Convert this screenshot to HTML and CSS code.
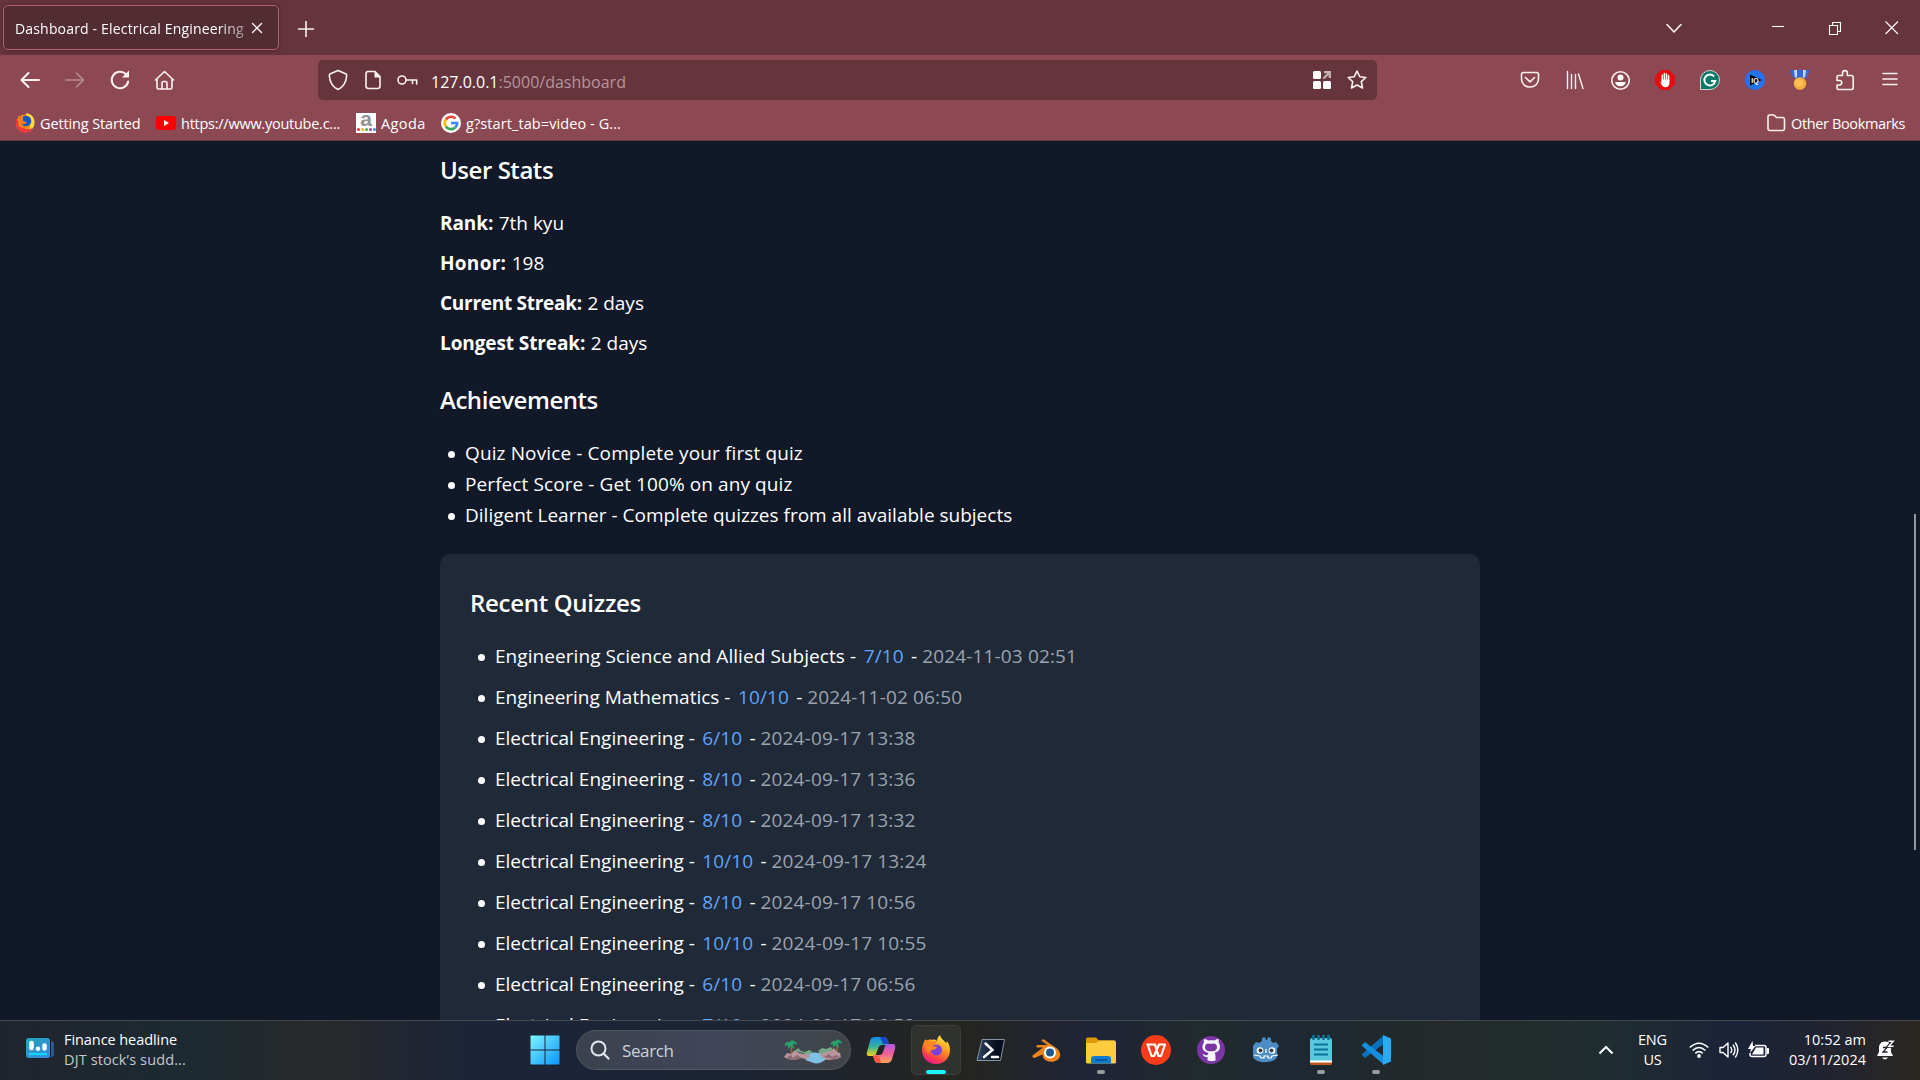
FILE: index.html
```html
<!DOCTYPE html>
<html lang="en">
<head>
<meta charset="utf-8">
<title>Dashboard - Electrical Engineering</title>
<link rel="stylesheet" href="styles.css">
</head>
<body>
<div class="screen">
  <header class="tabs">
    <div class="tab"><span class="tab-title">Dashboard - Electrical Engineering</span>
      <svg class="tab-close" width="12" height="12" viewBox="0 0 12 12"><path d="M1.500 1.500l9 9M10.500 1.500l-9 9" class="ln thin"/></svg>
    </div>
    <svg class="new-tab" width="16" height="16" viewBox="0 0 16 16"><path d="M8 .5v15M.5 8h15" class="ln"/></svg>
    <div class="window-controls">
      <svg width="20" height="20" viewBox="0 0 20 20"><path d="M3 6.500l7 7.500 7-7.500" class="ln"/></svg>
      <svg width="20" height="20" viewBox="0 0 20 20"><path d="M4 8.500h12" class="hair"/></svg>
      <svg width="20" height="20" viewBox="0 0 20 20"><path d="M4.500 7.500h8v9h-8zM7.500 7.500v-3h8v9h-3" class="hair"/></svg>
      <svg width="20" height="20" viewBox="0 0 20 20"><path d="M3.500 3.500l12.500 12.500M16 3.500L3.500 16" class="hair"/></svg>
    </div>
  </header>

  <div class="toolbar">
    <nav class="nav-icons">
      <svg width="22" height="22" viewBox="0 0 22 22"><path d="M20 11H3M9.500 4L2.500 11l7 7" class="ln bold"/></svg>
      <svg class="dim" width="22" height="22" viewBox="0 0 22 22"><path d="M2 11h17M12.500 4l7 7-7 7" class="ln"/></svg>
      <svg width="22" height="22" viewBox="0 0 22 22"><path d="M19.200 12.500A8.300 8.300 0 1 1 16.800 5" class="ln bold"/><path d="M20 1.500v7h-7z" fill="#fbf0f2"/></svg>
      <svg width="22" height="22" viewBox="0 0 22 22"><path d="M1.500 11L10.500 2.500l9 8.500M3 10v8.500q0 1.500 1.500 1.500h12q1.500 0 1.500-1.500V10M8 20v-6q0-1.500 1.500-1.500h2q1.500 0 1.500 1.500v6" class="ln"/></svg>
    </nav>
    <div class="urlbar">
      <svg width="20" height="22" viewBox="0 0 20 22"><path d="M10 1.500l7.500 3.300q1.300.6 1.200 2C18.200 13 15.500 18 10 20.500 4.500 18 1.800 13 1.300 6.800q-.1-1.400 1.200-2z" class="ln"/></svg>
      <svg class="doc" width="18" height="20" viewBox="0 0 18 20"><path d="M4 1.500h7l5 5V16q0 2.500-2.500 2.500h-9Q2 18.500 2 16V4Q2 1.500 4 1.500z" class="ln"/><path d="M10.500 1v6.500H17z" fill="#fbf0f2"/></svg>
      <svg class="key" width="21" height="14" viewBox="0 0 21 14"><circle cx="5" cy="7" r="4" class="ln"/><path d="M9 7h10.700v4M15.500 7v3.500" class="ln"/></svg>
      <span class="url">127.0.0.1<i>:5000/dashboard</i></span>
      <svg class="grid" width="18" height="18" viewBox="0 0 18 18"><rect width="8" height="8" rx="1.500" fill="#fff"/><rect y="10" width="8" height="8" rx="1.500" fill="#fff"/><rect x="10" y="10" width="8" height="8" rx="1.500" fill="#fff"/><path d="M10.500 7.500L15.500 2.500M11 1.200h5.800V7" fill="none" stroke="#c3b1b5" stroke-width="2.300"/></svg>
      <svg width="22" height="22" viewBox="0 0 22 22"><path d="M11 2l2.700 5.700 6.100.8-4.500 4.200 1.200 6.300-5.500-3-5.500 3 1.200-6.300L2.200 8.500l6.100-.8z" class="ln"/></svg>
    </div>
    <div class="extensions">
      <svg width="22" height="22" viewBox="0 0 22 22"><path d="M4.500 3.500h13q2 0 2 2v4.200c0 5-3.500 8.300-8.500 8.300S2.500 14.700 2.500 9.700V5.500q0-2 2-2zM6.500 8.500L11 12.800l4.500-4.300" class="ln"/></svg>
      <svg width="22" height="22" viewBox="0 0 22 22"><path d="M3.500 2.500v17M7.500 5.500v14M11.500 5.500v14M14.500 5l4.500 14.500" class="ln thin"/></svg>
      <svg width="22" height="22" viewBox="0 0 22 22"><circle cx="11.500" cy="11.500" r="8.700" class="ln"/><circle cx="11.500" cy="8.500" r="3" fill="#fff"/><path d="M6.300 13h10.400c0 2.600-2.400 4.200-5.200 4.200s-5.200-1.600-5.200-4.200z" fill="#fff"/></svg>
      <svg width="22" height="22" viewBox="0 0 22 22"><path d="M7 1h8l6 6v8l-6 6H7l-6-6V7z" fill="#e40d0d"/><path d="M8.300 12V6.200M10.400 11V4.500M12.500 11V5M14.600 12V6.800" stroke="#fff" stroke-width="1.500" stroke-linecap="round"/><path d="M7.500 10.500h7.900v3.500c0 2.500-1.400 4.200-4 4.200-2.200 0-3.600-1.400-5-5l1.100-.7z" fill="#fff"/></svg>
      <svg width="22" height="22" viewBox="0 0 22 22"><path d="M1.500 20.500V11a9.500 9.500 0 1 1 9.500 9.500z" fill="#077b68" stroke="#d9d3d3"/><path d="M15.200 7.500A5.500 5.500 0 1 0 16.300 12H12" fill="none" stroke="#fff" stroke-width="2"/></svg>
      <div class="iq"><svg width="20" height="20" viewBox="0 0 20 20"><path d="M5 4.500l12 5.500-12 5.500z" fill="#04070f"/></svg><b>IQ</b></div>
      <svg width="22" height="22" viewBox="0 0 22 22"><path d="M1 1h20l-3.500 8h-13z" fill="#3767dd"/><path d="M5 1h3v7.500H6zM14 1h3l-1 7.500h-2z" fill="#c4daf4"/><circle cx="11" cy="14.500" r="6.300" fill="#f7ac41"/><circle cx="10" cy="13.500" r="4" fill="#ffc154"/></svg>
      <svg width="22" height="22" viewBox="0 0 22 22"><path d="M3 9.500V8Q3 6.500 4.500 6.500h4V4a2.400 2.400 0 0 1 4.800 0v2.500h4.200q1.700 0 1.700 1.700v10.600q0 1.700-1.700 1.700h-13Q3 20.500 3 19v-3h2.500a2.200 2.200 0 0 0 0-4.500H3z" class="ln"/></svg>
      <svg width="22" height="22" viewBox="0 0 22 22"><path d="M4 4.500h14M4 10h14M4 15.500h14" class="ln"/></svg>
    </div>
  </div>

  <div class="bookmarks">
    <a class="getting"><svg width="20" height="20" viewBox="0 0 20 20"><circle cx="10" cy="10.500" r="9" fill="#ff8a16"/><path d="M11 0c6 1 9 5 8.500 10.500-.5 4.500-3.500 8-7.500 8.500 4-4 4-10 1-13-1-2-2-4-2-6z" fill="#ffdc3d"/><path d="M1.500 6c-2 7 2 13.500 8.500 13.500 4 0 7-2 8-5-4 3-10 2-11-3z" fill="#f0393c"/><circle cx="11" cy="8" r="5.300" fill="#1556c6"/><path d="M3 3c2 0 3 1 5 1.500 1 1-1 3 1 4 2 0 3 0 2 2-2 1-3 1-4 0 0 3 3 4 6 2-3 5-10 3-10-3z" fill="#ff7d19"/></svg><span>Getting Started</span></a>
    <a class="youtube"><svg width="20" height="20" viewBox="0 0 20 20"><rect y="3" width="20" height="14" rx="3" fill="#f00"/><path d="M8 7l5 3-5 3z" fill="#fff"/></svg><span>https://www.youtube.c...</span></a>
    <a class="agoda"><b class="agoda-logo"><em>a</em><u><s></s><s></s><s></s><s></s><s></s></u></b><span>Agoda</span></a>
    <a class="google"><svg width="20" height="20" viewBox="0 0 20 20"><circle cx="10" cy="10" r="10" fill="#fff"/><g fill="none" stroke-width="2.700"><path d="M4.900 6.500A6.200 6.200 0 0 1 14.500 5.600" stroke="#ea4335"/><path d="M4.900 13.500A6.200 6.200 0 0 1 4.900 6.500" stroke="#fbbc05"/><path d="M14.200 14.600A6.200 6.200 0 0 1 4.900 13.500" stroke="#34a853"/><path d="M10 10h6.200a6.200 6.200 0 0 1-2 4.600" stroke="#4285f4"/></g></svg><span>g?start_tab=video - G...</span></a>
    <a class="other"><svg width="20" height="20" viewBox="0 0 20 20"><path d="M3.500 2h4.500l2.500 2.500H16.500q2 0 2 2V15.500q0 2-2 2h-12.500q-2 0-2-2V3.500Q2 2 3.500 2z" class="ln"/></svg><span>Other Bookmarks</span></a>
  </div>

  <main class="page">
    <div class="content">
      <h3>User Stats</h3>
      <div class="stats">
        <p><strong>Rank:</strong> 7th kyu</p>
        <p><strong class="honor">Honor:</strong> 198</p>
        <p><strong class="current">Current Streak:</strong> 2 days</p>
        <p><strong>Longest Streak:</strong> 2 days</p>
      </div>
      <h3>Achievements</h3>
      <ul class="achievements">
        <li>Quiz Novice - Complete your first quiz</li>
        <li>Perfect Score - Get 100% on any quiz</li>
        <li>Diligent Learner - Complete quizzes from all available subjects</li>
      </ul>
      <section class="card">
        <h3>Recent Quizzes</h3>
        <ul class="quizzes">
          <li>Engineering Science and Allied Subjects - <span class="score">7/10</span> - <time>2024-11-03 02:51</time></li>
          <li>Engineering Mathematics - <span class="score">10/10</span> - <time>2024-11-02 06:50</time></li>
          <li>Electrical Engineering - <span class="score">6/10</span> - <time>2024-09-17 13:38</time></li>
          <li>Electrical Engineering - <span class="score">8/10</span> - <time>2024-09-17 13:36</time></li>
          <li>Electrical Engineering - <span class="score">8/10</span> - <time>2024-09-17 13:32</time></li>
          <li>Electrical Engineering - <span class="score">10/10</span> - <time>2024-09-17 13:24</time></li>
          <li>Electrical Engineering - <span class="score">8/10</span> - <time>2024-09-17 10:56</time></li>
          <li>Electrical Engineering - <span class="score">10/10</span> - <time>2024-09-17 10:55</time></li>
          <li>Electrical Engineering - <span class="score">6/10</span> - <time>2024-09-17 06:56</time></li>
          <li>Electrical Engineering - <span class="score">7/10</span> - <time>2024-09-17 06:52</time></li>
        </ul>
      </section>
    </div>
    <div class="scroll-thumb"></div>
  </main>

  <footer class="taskbar">
    <div class="widget">
      <svg width="28" height="24" viewBox="0 0 28 24"><defs><linearGradient id="wg" x1="0" y1="0" x2="1" y2="1"><stop offset="0" stop-color="#1fa6b8"/><stop offset="1" stop-color="#3888e0"/></linearGradient></defs><rect x="8" y="5" width="20" height="16" rx="3" fill="#145fb0"/><rect width="25" height="20" y="2" rx="3" fill="#0a2038"/><rect width="24" height="20" y="2" rx="2.500" fill="url(#wg)"/><path d="M5.500 7v5M12 12.700v.1M18.500 9.500v3" stroke="#fff" stroke-width="4.500" stroke-linecap="round"/><path d="M3 18h18" stroke="#0fd7fb" stroke-width="2.300"/></svg>
      <div class="headline"><span>Finance headline</span><small>DJT stock’s sudd...</small></div>
    </div>
    <div class="apps">
      <svg class="start" width="30" height="30" viewBox="0 0 30 30"><defs><linearGradient id="win" x1="0" y1="0" x2="1" y2="1"><stop offset="0" stop-color="#7df4ff"/><stop offset="1" stop-color="#0a95ff"/></linearGradient></defs><path d="M1 .5h13.500v14H.5V1zM15.500.5H29l.5.5v13.500h-14zM.5 15.500h14v14H1l-.5-.5zM15.500 15.500h14V29l-.5.5H15.500z" fill="url(#win)"/></svg>
      <div class="search">
        <svg width="20" height="20" viewBox="0 0 20 20"><circle cx="8.500" cy="8.500" r="7" fill="none" stroke="#e3e6ec" stroke-width="2"/><path d="M13.500 13.500l5 5" stroke="#e3e6ec" stroke-width="2.300" stroke-linecap="round"/></svg>
        <span>Search</span>
        <svg class="island" width="58" height="26" viewBox="0 0 58 26"><path d="M7.500 18V5M53 16V3" stroke="#95642f" stroke-width="1.700"/><path d="M0 19l3-4 4 1 4-4 4 3 5 1 3-2 4 2 6 1 4-4 5-2 4 2 4-3 3 4 3 1 1 4-4 2-9 1-8-2-10 2-9-2-8 2-5-1z" fill="#b7959c"/><path d="M11 13l3-3 3 3 4 1 4-2 4 2-6 2zM34 13l4-3 4 1 5-2 2 3-8 2-3 2z" fill="#70ab84"/><path d="M3 19l4-2 2 3 4-3 5 3-6 2-8-1zM40 19l5-3 3 3 4-2 4 2-6 2z" fill="#8d6a74"/><path d="M25 15.500q6-2 11 0l1 3 5 3-5 3q-6 2-10-.5l-6-2 5-3z" fill="#7fc1e4"/><path d="M1 6q2-3 5-2 1-3 4-1 3 1 3 4-3-2-4-.5l1 4.500-3-3-3 3v-4l-3 1zM47 5q2-3 5-2 1-3 3-1 3 1 3 4-3-2-4-.5l1 4.500-3-3-3 3v-4l-2 1z" fill="#27a16d"/></svg>
      </div>
      <div class="app"><svg width="30" height="30" viewBox="0 0 30 30"><defs><linearGradient id="c1" x1="0" y1="0" x2="0" y2="1"><stop offset="0" stop-color="#168be9"/><stop offset=".5" stop-color="#34b39c"/><stop offset="1" stop-color="#f5d315"/></linearGradient><linearGradient id="c2" x1="0" y1="0" x2="0" y2="1"><stop offset="0" stop-color="#ad58ea"/><stop offset=".5" stop-color="#ef5f96"/><stop offset="1" stop-color="#ffa65b"/></linearGradient></defs><path d="M9 2h9q3 0 4 4l1 4h-7q-3 0-4 4l-2 5q-1 2-3 2H3q-3 0-2-4L4 6q1-4 5-4z" fill="url(#c1)"/><path d="M14 2h4q3 0 4 4l1 3h-6z" fill="#1948c7"/><path d="M21 28h-9q-3 0-4-4l-1-4h6q3 0 4-3l2-6q1-2 3-2h5q3 0 2 5l-3 10q-1 4-5 4z" fill="url(#c2)"/><path d="M15 28h-3q-3 0-4-4l-1-3h6z" fill="#fb5545"/></svg></div>
      <div class="app active"><svg width="30" height="30" viewBox="0 0 30 30"><defs><linearGradient id="fx" x1=".8" y1="0" x2=".3" y2="1"><stop offset="0" stop-color="#fff24b"/><stop offset=".4" stop-color="#ff9d20"/><stop offset=".75" stop-color="#ff4545"/><stop offset="1" stop-color="#e9168a"/></linearGradient></defs><path d="M19 0c1 4 4 5 6 8 1-1 1-2 1-2 2 3 3 6 3 9 0 8-6 14-14 14S1 23 1 15c0-5 2-9 4-11v2c2-1 4-2 6-1 2-1 4 0 5 1 0-2 1-4 3-6z" fill="url(#fx)"/><circle cx="15.500" cy="15" r="5.500" fill="#7941df"/><path d="M5 5l7 2 3-1c-1 3-2 4-4 5 2 1 4 0 5 1 0 2-3 3-6 3l-3 4c-3-5-3-9-2-14z" fill="#ff861f"/></svg></div>
      <div class="app"><svg width="30" height="30" viewBox="0 0 30 30"><defs><linearGradient id="ps"><stop offset="0" stop-color="#314764"/><stop offset=".7" stop-color="#07101f"/></linearGradient></defs><path d="M6 4.500h22.500L24.500 25.500H1z" fill="url(#ps)" stroke="#8592a2"/><path d="M9.500 8.500l7 6.500L8 22M16 22h6" fill="none" stroke="#fff" stroke-width="2.400" stroke-linecap="round"/></svg></div>
      <div class="app"><svg width="30" height="30" viewBox="0 0 30 30"><path d="M6 10h10.500L11 6.200q-1-2 1.500-2L26 13.500c4 4 4 8 1.500 10.500-4 4-12 4-15.500-1.500l-.5-3L3.500 23q-2.500 0-2-2.500L12 12.500H6q-1.500-1.500 0-2.500z" fill="#e9841c"/><circle cx="19" cy="17.500" r="6" fill="#fff"/><circle cx="19" cy="17.500" r="4" fill="#21598e"/></svg></div>
      <div class="app open"><svg width="30" height="30" viewBox="0 0 30 30"><path d="M0 4q0-1.500 1.500-1.500H10l3 3H28V12H0z" fill="#dc9a09"/><path d="M0 8h10l3-2.500h15.500Q30 5.500 30 7v20q0 1.500-1.500 1.500h-27Q0 28.500 0 27z" fill="#fdcc3e"/><path d="M5 28.500V24q0-3 3-3h14q3 0 3 3v4.500z" fill="#117bd1"/><path d="M9 25h12" stroke="#075090" stroke-width="1.400"/></svg></div>
      <div class="app"><svg width="30" height="30" viewBox="0 0 30 30"><circle cx="15" cy="15" r="15" fill="#f93c19"/><path d="M5.500 9.500H14l3.500 11.500h2.500L24 9.500H18l-5 11.500h-2.500L7 10.500" fill="none" stroke="#fff" stroke-width="2.200" stroke-linejoin="round"/></svg></div>
      <div class="app"><svg width="30" height="30" viewBox="0 0 30 30"><circle cx="15" cy="15" r="14" fill="#7b36a5"/><path d="M11.500 25.500v-3.500c-3 .5-4-1-5-3 2 0 2 2 5 1l1-2c-4-1-6-3-6-6 0-2 .6-3 1.500-4.500-.4-1.500-.2-2.500.3-3.500 1.500 0 3 .8 4 1.500 2-.5 4-.5 6 0 1-.8 2.500-1.500 4-1.500.5 1 .6 2 .2 3.500C23.500 9 24 10 24 12c0 3-2 5-5.500 6q1 1 1 3v4.500q-4 1.500-8 0z" fill="#f5f2fa"/><path d="M12 16q-3-1-3-4 0-3 3-3.500 3 .7 6 0 3 .5 3 3.500 0 3-3 4-3 .6-6 0z" fill="#7b36a5"/></svg></div>
      <div class="app"><svg width="30" height="30" viewBox="0 0 30 30"><path d="M2 11l3-4 3 1 3-2V3l3-1 1 3h1l1-3 3 1v3l2 2 3-1 3 4-2 3v8c-3 7-21 7-24 0v-8z" fill="#4c8dc5"/><circle cx="9" cy="15.500" r="3.300" fill="#fff"/><circle cx="21" cy="15.500" r="3.300" fill="#fff"/><circle cx="9.500" cy="15.500" r="2" fill="#3f4245"/><circle cx="20.500" cy="15.500" r="2" fill="#3f4245"/><path d="M15 14v4M3 20l6 1 1 2h3v-2h4v2h3l1-2 6-1" fill="none" stroke="#fff" stroke-width="1.200"/></svg></div>
      <div class="app open"><svg width="30" height="30" viewBox="0 0 30 30"><rect x="4" y="20" width="22" height="10" rx="1.500" fill="#b85c1d"/><rect x="4" y="18" width="22" height="9.500" fill="#fff"/><path d="M4 5q0-2 2-2h18q2 0 2 2v20.500H4z" fill="#59c8de"/><path d="M8 9.500h14M8 14.500h14M8 19.500h14" stroke="#087397" stroke-width="2"/><path d="M7.500 1v2.500M12.500 1v2.500M17.500 1v2.500M22.500 1v2.500" stroke="#0b708e" stroke-width="3" stroke-linecap="round"/></svg></div>
      <div class="app open"><svg width="30" height="30" viewBox="0 0 30 30"><path d="M22 1L.5 19.500l3.500 3.500L23 8.500z" fill="#0a72bd"/><path d="M22 29L.5 10.500 4 7 23 21.500z" fill="#148fdd"/><path d="M22 0l8 3.500v23L22 30z" fill="#2aaaf3"/></svg></div>
    </div>
    <div class="tray">
      <svg class="up" width="16" height="16" viewBox="0 0 16 16"><path d="M1.500 11.500L8 5l6.500 6.500" fill="none" stroke="#fff" stroke-width="2"/></svg>
      <div class="lang">ENG<br>US</div>
      <svg class="wifi" width="20" height="18" viewBox="0 0 20 18"><g fill="none" stroke="#fff" stroke-width="1.600"><path d="M.8 6.500q9.200-8.500 18.400 0M3.600 9.500q6.400-6 12.800 0M6.300 12.300q3.700-3.500 7.400 0"/></g><circle cx="10" cy="15" r="1.900" fill="#fff"/></svg>
      <svg class="sound" width="20" height="18" viewBox="0 0 20 18"><path d="M1 6.500h3L9 2v14l-5-4.500H1zM11.500 6q2.500 3 0 6M14 3.800q4 5.200 0 10.400M16.300 1.500q5 7.500 0 15" fill="none" stroke="#fff" stroke-width="1.400" stroke-linejoin="round"/></svg>
      <svg class="battery" width="22" height="18" viewBox="0 0 22 18"><path d="M7 4.500h9q2 0 2 2v7q0 2-2 2H4q-2 0-2-2V12" fill="none" stroke="#fff" stroke-width="1.500"/><path d="M19 7.500h1.500v5H19" fill="#fff" stroke="#fff"/><path d="M8 6.500h7.500v7H4zM4.500 0L0 8h3l-1 4 5.500-7H5z" fill="#fff"/></svg>
      <div class="clock">10:52 am<br>03/11/2024</div>
      <div class="bell"><svg width="18" height="20" viewBox="0 0 18 20"><path d="M8 1.500c4.500 0 6 3 6 6V12l2 4H0l2-4V7.500c0-3 2-6 6-6zM5 17.500h6q-3 4-6 0z" fill="#fff"/><path d="M6 7.500h4l-4 4.500H10.500" fill="none" stroke="#20232c" stroke-width="1.300"/><path d="M12 1.500h4l-4 4.500h4.500" fill="none" stroke="#20232c" stroke-width="3.500"/><path d="M11.500 1.200h4.800l-4.500 5H16.500" fill="none" stroke="#fff" stroke-width="1.400"/></svg></div>
    </div>
  </footer>
</div>
</body>
</html>
```
FILE: styles.css
```css
* { box-sizing: border-box; }
body { margin: 0; background: #111827; font-family: "Open Sans", "Noto Sans", sans-serif; color: #fff; overflow: hidden; }
svg { display: block; flex: none; overflow: visible; }
.ln { fill: none; stroke: #fbf0f2; stroke-width: 1.6; stroke-linecap: round; stroke-linejoin: round; }
.bold { stroke-width: 2; }
.thin { stroke-width: 1.4; }
.hair { fill: none; stroke: #fff; stroke-width: 1.1; }
.dim { opacity: .4; }

.screen { width: 1920px; height: 1080px; display: grid; grid-template-rows: 55px 50px 36px 879px 60px; }

.tabs { display: flex; align-items: center; background: #66343c; }
.tab { display: flex; align-items: center; width: 276px; height: 45px; margin-left: 3px; padding: 0 15px 0 11px; background: #522c33; border: 1px solid #b5606f; border-radius: 5px; box-shadow: 0 0 4px rgba(0, 0, 0, .35); }
.tab-title { width: 230px; padding-top: 2px; overflow: hidden; white-space: nowrap; font-size: 14px; letter-spacing: .17px; -webkit-mask-image: linear-gradient(90deg, #000 88%, rgba(0, 0, 0, .45)); mask-image: linear-gradient(90deg, #000 88%, rgba(0, 0, 0, .45)); }
.tab-close { margin-left: 7px; }
.new-tab { margin-left: 19px; margin-top: 2px; }
.window-controls { display: flex; align-items: center; margin-left: auto; margin-right: 18px; }
.window-controls svg { margin-left: 37px; }
.window-controls svg:nth-child(2) { margin-left: 84px; }

.toolbar { display: flex; align-items: center; background: #8c4953; }
.nav-icons { display: flex; gap: 23px; width: 318px; padding-left: 19px; }
.urlbar { display: flex; align-items: center; width: 1059px; height: 40px; padding: 0 9px 0 10px; background: #66343c; border-radius: 5px; }
.doc { margin-left: 16px; }
.key { margin-left: 15px; }
.url { margin-left: 13px; padding-top: 4px; font-size: 16px; }
.url i { font-style: normal; color: #b7959b; }
.grid { margin-left: auto; margin-right: 15px; }
.extensions { display: flex; gap: 23px; margin-left: 142px; }
.iq { display: grid; place-items: center; width: 20px; height: 20px; margin: 1px; background: #2372f5; border-radius: 50%; }
.iq > * { grid-area: 1 / 1; }
.iq b { font: 700 7px "Liberation Sans", sans-serif; color: #fff; }

.bookmarks { display: flex; align-items: center; padding: 0 15px; background: #8c4953; border-bottom: 1px solid #66343c; font-size: 14.5px; white-space: nowrap; }
.bookmarks a { display: flex; align-items: center; gap: 5px; }
.bookmarks span { padding-top: 2px; }
.getting { width: 141px; letter-spacing: -.13px; }
.youtube { width: 200px; letter-spacing: -.255px; }
.agoda { width: 85px; letter-spacing: .4px; }
.google { letter-spacing: .087px; }
.other { margin-left: auto; letter-spacing: -.37px; }
.agoda-logo { display: flex; flex-direction: column; width: 20px; height: 20px; background: #fff; letter-spacing: 0; }
.agoda-logo em { height: 15px; font: 700 21px/11px "Liberation Sans", sans-serif; color: #929292; text-align: center; }
.agoda-logo u { display: flex; gap: 1px; justify-content: center; text-decoration: none; }
.agoda-logo s { width: 3px; height: 3px; border-radius: 50%; background: #f12a35; }
.agoda-logo s:nth-child(2) { background: #f9b11b; }
.agoda-logo s:nth-child(3) { background: #43ae54; }
.agoda-logo s:nth-child(4) { background: #9d3ba3; }
.agoda-logo s:nth-child(5) { background: #368ee1; }

.page { display: flex; justify-content: center; position: relative; overflow: hidden; background: #111827; }
.content { width: 1040px; padding-top: 11px; font-size: 19px; line-height: 31px; }
h3 { margin: 0 0 21px; font-size: 24px; line-height: 35px; font-weight: 600; letter-spacing: -.46px; }
p { margin: 0; }
strong { margin-right: .5px; letter-spacing: -.1px; }
.honor { letter-spacing: .28px; }
.current { letter-spacing: -.27px; }
.stats { display: flex; flex-direction: column; gap: 9px; margin-bottom: 23px; }
ul { margin: 0; padding: 0 0 0 25px; list-style: none; }
li::before { content: ""; display: inline-block; width: 7px; height: 7px; margin: 0 10.5px 0 -17.5px; border-radius: 50%; background: #fff; vertical-align: 2.5px; }
.achievements { margin-bottom: 23px; }
.achievements li:nth-child(1) { letter-spacing: .12px; }
.achievements li:nth-child(2) { letter-spacing: .09px; }
.card { padding: 31px 30px; background: #1f2937; border-radius: 10px; }
.card h3 { letter-spacing: -.3px; }
.quizzes { display: flex; flex-direction: column; gap: 10px; }
.quizzes li:nth-child(1) { letter-spacing: .06px; }
.score { margin: 0 2.2px 0 2.5px; color: #60a5fa; letter-spacing: .15px; }
time { color: #9ca3af; letter-spacing: .154px; }
.scroll-thumb { position: absolute; right: 4px; top: 373px; width: 2px; height: 336px; background: #949699; }

.taskbar { display: flex; border-top: 1px solid #45484c; background: linear-gradient(90deg, #20242f 0, #1c2a31 190px, #28292a 320px, #1c2438 470px, #1c2436 700px, #20242b 850px, #25251f 960px, #1f2438 1090px, #212a2c 1200px, #1e2833 1290px, #232a29 1440px, #202d30 1600px, #1b2339 1740px, #22242e 1840px, #2b2722 1920px); }
.widget { display: flex; align-items: center; gap: 10px; width: 529px; padding-left: 26px; }
.widget > svg { margin-top: -5px; }
.headline { display: flex; flex-direction: column; font-size: 14.5px; line-height: 20px; letter-spacing: -.07px; padding-bottom: 1px; }
.headline small { font-size: 14.5px; letter-spacing: .12px; color: #c6c8cb; }
.apps { display: flex; align-items: center; padding-bottom: 1px; }
.start { margin-left: 1px; }
.search { display: flex; align-items: center; width: 275px; height: 40px; margin: 0 5px 0 16px; padding: 0 8px 0 13px; background: linear-gradient(90deg, #3b424d, #40455a 50%, #414548); border: 1px solid #525861; border-radius: 20px; }
.search span { margin-left: 12px; font-size: 17px; letter-spacing: -.39px; color: #cfd2d9; }
.island { margin: 2px 0 0 auto; }
.app { position: relative; display: flex; align-items: center; justify-content: center; width: 50px; height: 50px; margin-right: 5px; border: 1px solid transparent; border-radius: 5px; }
.app.active { background: #2f322f; border-color: #3b3d3b; }
.app.active::after, .app.open::after { content: ""; position: absolute; bottom: 0; left: 20px; width: 8px; height: 4px; border-radius: 2px; background: #9a9da0; }
.app.active::after { left: 14px; width: 20px; background: #1df6ff; }
.tray { display: flex; align-items: center; margin-left: auto; padding: 0 25px 1px 0; font-size: 14.5px; line-height: 20px; }
.lang { margin: 0 22px 0 24px; text-align: center; letter-spacing: -.17px; }
.sound { margin-left: 10px; }
.battery { margin-left: 9px; }
.clock { width: 78px; margin-left: 18px; text-align: right; white-space: nowrap; }
.bell { margin-left: 11px; }
```
